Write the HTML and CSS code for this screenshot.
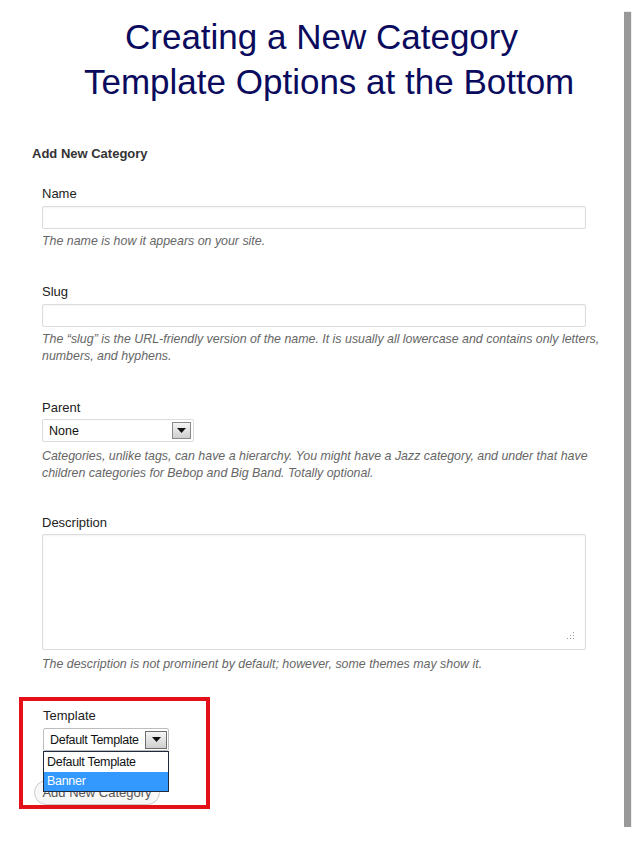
FILE: index.html
```html
<!DOCTYPE html>
<html>
<head>
<meta charset="utf-8">
<title>Creating a New Category</title>
<link rel="stylesheet" href="styles.css">
</head>
<body>
<div class="sheet">
  <header class="title">
    <div class="t1">Creating a New Category</div>
    <div class="t2">Template Options at the Bottom</div>
  </header>
  <section class="panel">
    <h2 class="heading">Add New Category</h2>

    <div class="field f-name">
      <div class="label">Name</div>
      <div class="input"></div>
      <p class="desc">The name is how it appears on your site.</p>
    </div>

    <div class="field f-slug">
      <div class="label">Slug</div>
      <div class="input"></div>
      <p class="desc">The “slug” is the URL-friendly version of the name. It is usually all lowercase and contains only letters, numbers, and hyphens.</p>
    </div>

    <div class="field f-parent">
      <div class="label">Parent</div>
      <div class="select select-parent">
        <span class="sel-text">None</span>
        <span class="arrow"><svg width="9" height="5" viewBox="0 0 9 5"><path d="M0 0H9L4.5 5Z" fill="#111"/></svg></span>
      </div>
      <p class="desc desc-parent">Categories, unlike tags, can have a hierarchy. You might have a Jazz category, and under that have children categories for Bebop and Big Band. Totally optional.</p>
    </div>

    <div class="field f-desc">
      <div class="label">Description</div>
      <div class="textarea">
        <svg class="grip" width="9" height="9" viewBox="0 0 9 9"><g fill="#999"><rect x="7" y="1" width="1" height="1"/><rect x="7" y="4" width="1" height="1"/><rect x="7" y="7" width="1" height="1"/><rect x="4" y="4" width="1" height="1"/><rect x="4" y="7" width="1" height="1"/><rect x="1" y="7" width="1" height="1"/></g></svg>
      </div>
      <p class="desc desc-last">The description is not prominent by default; however, some themes may show it.</p>
    </div>

    <div class="template-box">
      <div class="label">Template</div>
      <div class="select select-tpl">
        <span class="sel-text">Default Template</span>
        <span class="arrow arrow-tpl"><svg width="9" height="5" viewBox="0 0 9 5"><path d="M0 0H9L4.5 5Z" fill="#111"/></svg></span>
        <ul class="dropdown">
          <li class="opt">Default Template</li>
          <li class="opt opt-active">Banner</li>
        </ul>
      </div>
      <div class="button">Add New Category</div>
    </div>
  </section>
</div>
</body>
</html>
```

FILE: styles.css
```css
html, body {
  margin: 0;
  padding: 0;
  background: #ffffff;
}

body {
  font-family: "Liberation Sans", Arial, sans-serif;
}

.sheet {
  width: 624px;
  height: 827px;
  background: #ffffff;
  box-shadow: 7px 12px 1px #999999;
}

.title {
  padding-top: 14px;
  color: #0b0b5e;
  font-size: 35px;
  line-height: 45px;
}

.t1 {
  padding-left: 125px;
}

.t2 {
  padding-left: 84px;
}

.panel {
  padding: 42px 10px 0 32px;
}

.heading {
  margin: 0;
  font-size: 13px;
  line-height: 16px;
  font-weight: bold;
  color: #333333;
}

.field {
  padding-left: 10px;
}

.label {
  font-size: 13px;
  line-height: 16px;
  color: #222222;
}

.input {
  margin-top: 4px;
  width: 542px;
  height: 21px;
  border: 1px solid #dcdcdc;
  border-radius: 2px;
  box-shadow: inset 0 1px 2px rgba(0, 0, 0, 0.05);
  background: #ffffff;
}

.desc {
  margin: 4px 0 0;
  font-size: 12.4px;
  line-height: 17px;
  font-style: italic;
  color: #666666;
}

.f-name {
  margin-top: 24px;
}

.f-slug {
  margin-top: 34px;
}

.f-parent {
  margin-top: 35px;
}

.f-desc {
  margin-top: 33px;
}

.select {
  position: relative;
  margin-top: 3px;
  height: 21px;
  border: 1px solid #dcdcdc;
  border-radius: 2px;
  background: #ffffff;
  display: flex;
  align-items: center;
  justify-content: space-between;
  box-sizing: content-box;
}

.select-parent {
  width: 150px;
}

.desc-parent {
  margin-top: 6px;
}

.sel-text {
  padding-left: 6px;
  font-size: 12.5px;
  color: #111111;
}

.arrow {
  width: 17px;
  height: 15px;
  margin-right: 2px;
  border: 1px solid #8a8a8a;
  background: linear-gradient(#f4f4f4, #cfcfcf);
  display: flex;
  align-items: center;
  justify-content: center;
}

.textarea {
  position: relative;
  margin-top: 3px;
  width: 542px;
  height: 114px;
  border: 1px solid #dcdcdc;
  border-radius: 2px;
  box-shadow: inset 0 1px 2px rgba(0, 0, 0, 0.05);
  display: flex;
  justify-content: flex-end;
  align-items: flex-end;
}

.grip {
  margin: 0 10px 9px 0;
}

.desc-last {
  margin-top: 6px;
}

.template-box {
  margin-top: 24px;
  margin-left: -13px;
  width: 163px;
  border: 4px solid #e3101a;
  padding: 7px 0 0 20px;
  height: 97px;
  box-sizing: content-box;
}

.select-tpl {
  margin-top: 4px;
  width: 124px;
  border-color: #bdbdbd;
}

.select-tpl .sel-text {
  padding-left: 6px;
  font-size: 12.5px;
  letter-spacing: -0.3px;
}

.arrow-tpl {
  width: 20px;
  height: 16px;
  margin-right: 1px;
  border-color: #6d6d6d;
}

.dropdown {
  position: absolute;
  left: -1px;
  top: 22px;
  margin: 0;
  padding: 0;
  list-style: none;
  width: 124px;
  border: 1px solid #1f2a3c;
  background: #ffffff;
  z-index: 2;
}

.opt {
  height: 20px;
  line-height: 20px;
  padding-left: 3px;
  font-size: 12.5px;
  letter-spacing: -0.3px;
  color: #111111;
}

.opt-active {
  height: 19px;
  line-height: 19px;
  background: #3399ff;
  color: #ffffff;
}

.button {
  margin-top: 29px;
  margin-left: -9px;
  width: 124px;
  height: 23px;
  border: 1px solid #cccccc;
  border-radius: 13px;
  background: #f7f7f7;
  font-size: 13px;
  line-height: 23px;
  text-align: center;
  color: #555555;
}
```
